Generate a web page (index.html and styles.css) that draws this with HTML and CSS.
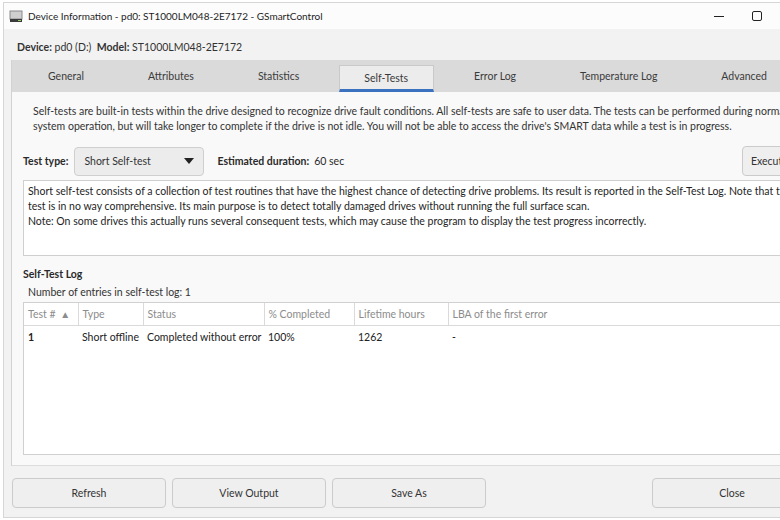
FILE: index.html
```html
<!doctype html>
<html>
  <head>
    <title>Device Information - pd0: ST1000LM048-2E7172 - GSmartControl</title>
    <link rel="stylesheet" href="styles.css">
  </head>
  <body>
    <div class="window">
      <!-- barra de titulo -->
      <div class="titlebar">
        <svg class="app-icon" width="14" height="13" viewBox="0 0 14 13">
          <rect x="1" y="1" width="12" height="8" fill="#cfcfcf" stroke="#8a8a8a"/>
          <rect x="1" y="9" width="12" height="3" fill="#3a3a3a"/>
          <rect x="9" y="10" width="3" height="1" fill="#9ad06a"/>
        </svg>
        <span class="title">Device Information - pd0: ST1000LM048-2E7172 - GSmartControl</span>
        <div class="controls">
          <span class="ctl">
            <svg width="12" height="12" viewBox="0 0 12 12"><line x1="1" y1="6.5" x2="11" y2="6.5" stroke="#222" stroke-width="1"/></svg>
          </span>
          <span class="ctl">
            <svg width="12" height="12" viewBox="0 0 12 12"><rect x="1.5" y="1.5" width="9" height="9" rx="1.5" fill="none" stroke="#222" stroke-width="1"/></svg>
          </span>
          <span class="ctl">
            <svg width="12" height="12" viewBox="0 0 12 12"><path d="M1.5 1.5 L10.5 10.5 M10.5 1.5 L1.5 10.5" stroke="#222" stroke-width="1"/></svg>
          </span>
        </div>
      </div>

      <div class="devinfo">
        <b>Device:</b> pd0 (D:) &nbsp;<b>Model:</b> ST1000LM048-2E7172
      </div>

      <div class="notebook">
        <div class="tabs">
          <span class="tab">General</span>
          <span class="tab">Attributes</span>
          <span class="tab">Statistics</span>
          <span class="tab active">Self-Tests</span>
          <span class="tab">Error Log</span>
          <span class="tab">Temperature Log</span>
          <span class="tab">Advanced</span>
        </div>

        <div class="page">
          <p class="intro">Self-tests are built-in tests within the drive designed to recognize drive fault conditions. All self-tests are safe to user data. The tests can be performed during normal<br>system operation, but will take longer to complete if the drive is not idle. You will not be able to access the drive's SMART data while a test is in progress.</p>

          <div class="test-row">
            <b>Test type:</b>
            <div class="combo">
              <span>Short Self-test</span>
              <svg width="10" height="6" viewBox="0 0 10 6"><path d="M0 0 L10 0 L5 6 Z" fill="#222"/></svg>
            </div>
            <b class="est">Estimated duration:</b> <span>60 sec</span>
            <div class="spacer"></div>
            <button class="btn execute">Execute</button>
          </div>

          <div class="textview">Short self-test consists of a collection of test routines that have the highest chance of detecting drive problems. Its result is reported in the Self-Test Log. Note that this<br>test is in no way comprehensive. Its main purpose is to detect totally damaged drives without running the full surface scan.<br>Note: On some drives this actually runs several consequent tests, which may cause the program to display the test progress incorrectly.</div>

          <h4 class="log-title">Self-Test Log</h4>
          <div class="log-count">Number of entries in self-test log: 1</div>

          <div class="log">
            <table>
              <colgroup>
                <col style="width: 54px">
                <col style="width: 65px">
                <col style="width: 121px">
                <col style="width: 90px">
                <col style="width: 94px">
                <col>
              </colgroup>
              <thead>
                <tr>
                  <th>Test # <span class="sort">&#9650;</span></th>
                  <th>Type</th>
                  <th>Status</th>
                  <th>% Completed</th>
                  <th>Lifetime hours</th>
                  <th class="last">LBA of the first error</th>
                </tr>
              </thead>
              <tbody>
                <tr>
                  <td><b>1</b></td>
                  <td>Short offline</td>
                  <td>Completed without error</td>
                  <td>100%</td>
                  <td>1262</td>
                  <td>-</td>
                </tr>
              </tbody>
            </table>
          </div>
        </div>
      </div>

      <div class="buttons">
        <button class="btn">Refresh</button>
        <button class="btn">View Output</button>
        <button class="btn">Save As</button>
        <div class="spacer"></div>
        <button class="btn close">Close</button>
      </div>
    </div>
  </body>
</html>
```

FILE: styles.css
```css
/* Estilos gerais */
body {
  margin: 0;
  padding: 0;
  background-color: #fff;
  font-family: Lato, "Open Sans", sans-serif;
  font-size: 10.5px;
  color: #2a2a2a;
  overflow: hidden;
}

.window {
  width: 820px;
  height: 514px;
  margin: 2px 0 0 3px;
  background-color: #f2f2f2;
  border: 1px solid #d6d6d6;
  border-right: none;
  display: flex;
  flex-direction: column;
}

/* Barra de titulo */
.titlebar {
  height: 26px;
  flex-shrink: 0;
  background-color: #fcfcfc;
  display: flex;
  align-items: center;
  padding-left: 5px;
  padding-right: 10px;
}

.app-icon {
  margin-right: 5px;
}

.title {
  color: #1e1e1e;
  font-size: 10px;
}

.controls {
  display: flex;
  margin-left: auto;
}

.ctl {
  width: 38px;
  display: flex;
  justify-content: center;
}

/* Cabecalho do dispositivo */
.devinfo {
  height: 26px;
  flex-shrink: 0;
  padding: 5px 0 0 13px;
  line-height: 26px;
  color: #333;
}

/* Abas */
.notebook {
  margin-left: 7px;
  height: 406px;
  flex-shrink: 0;
  display: flex;
  flex-direction: column;
  border-left: 1px solid #d2d2d2;
}

.tabs {
  height: 32px;
  flex-shrink: 0;
  background-color: #dadada;
  display: flex;
  align-items: stretch;
  padding-left: 12px;
  gap: 16px;
  box-sizing: border-box;
}

.tab {
  display: flex;
  align-items: center;
  padding: 0 24px;
  color: #3a3a3a;
}

.tab.active {
  background-color: #ececec;
  border: 1px solid #c9c9c9;
  border-bottom: 3px solid #3b72c0;
  margin-top: 5px;
  padding-top: 1px;
  padding-left: 24px;
  padding-right: 25px;
}

.page {
  flex: 1;
  background-color: #f9f9f9;
  padding: 0 0 10px 11px;
  display: flex;
  flex-direction: column;
  border-bottom: 1px solid #dcdcdc;
}

.intro {
  margin: 12px 0 0 10px;
  line-height: 15px;
  white-space: nowrap;
  color: #333;
}

.test-row {
  display: flex;
  align-items: center;
  margin-top: 12px;
  height: 30px;
}

.combo {
  width: 110px;
  height: 27px;
  margin-left: 6px;
  padding: 0 9px;
  background-color: #ececec;
  border: 1px solid #cfcfcf;
  border-radius: 4px;
  display: flex;
  align-items: center;
  justify-content: space-between;
  color: #333;
}

.est {
  margin: 0 5px 0 13px;
}

.spacer {
  flex: 1;
}

.btn {
  font-family: Lato, "Open Sans", sans-serif;
  font-size: 10.5px;
  color: #333;
  background-color: #efefef;
  border: 1px solid #cbcbcb;
  border-radius: 4px;
  height: 30px;
  width: 154px;
}

.execute {
  width: 70px;
  text-align: left;
  padding-left: 8px;
  margin-right: 12px;
}

.textview {
  margin-top: 4px;
  height: 67px;
  background-color: #fff;
  border: 1px solid #cfcfcf;
  padding: 3px 0 4px 4px;
  line-height: 15px;
  white-space: nowrap;
  color: #1e1e1e;
}

.log-title {
  margin: 12px 0 0 0;
  font-size: 10.5px;
  color: #2a2a2a;
}

.log-count {
  margin: 6px 0 0 5px;
  color: #333;
}

/* Tabela do log */
.log {
  margin-top: 4px;
  flex: 1;
  background-color: #fff;
  border: 1px solid #d0d0d0;
  overflow: hidden;
}

table {
  width: 800px;
  border-collapse: collapse;
  table-layout: fixed;
  font-size: 10.5px;
}

th {
  font-weight: normal;
  color: #8c8c8c;
  text-align: left;
  height: 22px;
  padding: 0 4px;
  border-right: 1px solid #dadada;
  border-bottom: 1px solid #dadada;
  white-space: nowrap;
}

th.last {
  border-right: none;
}

.sort {
  font-size: 10px;
  margin-left: 2px;
}

td {
  height: 22px;
  padding: 0 4px;
  color: #222;
  white-space: nowrap;
  overflow: visible;
}

/* Botoes de baixo */
.buttons {
  display: flex;
  gap: 6px;
  margin: 12px 0 0 8px;
}

.close {
  width: 160px;
  margin-right: 12px;
}
```
